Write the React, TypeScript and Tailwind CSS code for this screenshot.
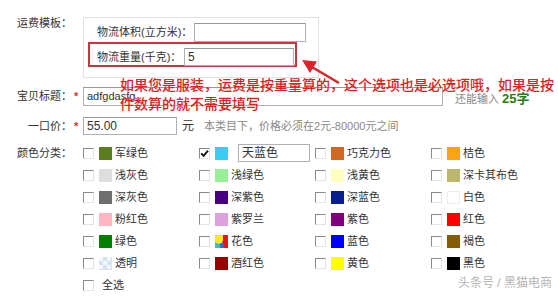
import React from "react";

const FONT = "[font-family:'Liberation_Sans','Noto_Sans_CJK_SC',sans-serif]";

function Checkbox({ checked = false }: { checked?: boolean }) {
  return (
    <span className="relative flex h-[11px] w-[11px] shrink-0 items-center justify-center border border-t-[#8a8a8a] border-l-[#8a8a8a] border-r-[#e4e4e4] border-b-[#e4e4e4] bg-white">
      {checked && (
        <svg width="9" height="9" viewBox="0 0 9 9" className="block">
          <path d="M1.2 4.4 L3.6 6.9 L8 1.6" fill="none" stroke="#111" strokeWidth="1.9" />
        </svg>
      )}
    </span>
  );
}

function FlowerSwatch() {
  return (
    <svg width="13" height="13" viewBox="0 0 13 13" className="block shrink-0">
      <rect x="0" y="0" width="13" height="13" fill="#fff" />
      <rect x="7" y="0" width="6" height="13" fill="#e8141c" />
      <polygon points="0,0 8,0 8,6 4,9 0,7" fill="#ffe81a" />
      <polygon points="0,7 4,9 5,13 0,13" fill="#3cc3a8" />
      <polygon points="4,9 8,7 9,13 5,13" fill="#2c6fd6" />
    </svg>
  );
}

function ClearSwatch() {
  return (
    <svg width="13" height="13" viewBox="0 0 13 13" className="block shrink-0">
      <rect x="0" y="0" width="13" height="13" fill="#d3e3f4" />
      <rect x="0" y="0" width="4" height="4" fill="#f4f8fd" />
      <rect x="8" y="0" width="4" height="4" fill="#f4f8fd" />
      <rect x="4" y="4" width="4" height="4" fill="#f4f8fd" />
      <rect x="0" y="8" width="4" height="4" fill="#f4f8fd" />
      <rect x="8" y="8" width="4" height="4" fill="#f4f8fd" />
    </svg>
  );
}

type Item = { name: string; color?: string; kind?: "flower" | "clear"; checked?: boolean; edit?: boolean; border?: boolean };

const items: Item[] = [
  { name: "军绿色", color: "#5a7d1e" },
  { name: "天蓝色", color: "#38cdf3", checked: true, edit: true },
  { name: "巧克力色", color: "#d2691e" },
  { name: "桔色", color: "#fca40f" },
  { name: "浅灰色", color: "#dedede" },
  { name: "浅绿色", color: "#96f196" },
  { name: "浅黄色", color: "#ffffbe" },
  { name: "深卡其布色", color: "#bdb76b" },
  { name: "深灰色", color: "#6e6e6e" },
  { name: "深紫色", color: "#4b0082" },
  { name: "深蓝色", color: "#0a1f8f" },
  { name: "白色", color: "#ffffff", border: true },
  { name: "粉红色", color: "#ffb6c1" },
  { name: "紫罗兰", color: "#dda0dd" },
  { name: "紫色", color: "#800080" },
  { name: "红色", color: "#ff0000" },
  { name: "绿色", color: "#008000" },
  { name: "花色", kind: "flower" },
  { name: "蓝色", color: "#0000ff" },
  { name: "褐色", color: "#855c00" },
  { name: "透明", kind: "clear" },
  { name: "酒红色", color: "#990000" },
  { name: "黄色", color: "#ffff00" },
  { name: "黑色", color: "#000000" },
];

function ColorItem({ item }: { item: Item }) {
  return (
    <div className="flex h-[22px] w-[116px] items-center">
      <Checkbox checked={item.checked} />
      <span className="ml-[5px] flex">
        {item.kind === "flower" ? (
          <FlowerSwatch />
        ) : item.kind === "clear" ? (
          <ClearSwatch />
        ) : (
          <span
            className={`block h-[13px] w-[13px] shrink-0 ${item.border ? "border border-[#eeeeee]" : ""}`}
            style={{ backgroundColor: item.color }}
          />
        )}
      </span>
      {item.edit ? (
        <span className="ml-[10px] flex h-[18px] w-[72px] items-center border border-[#b0b0b0] pl-[3px] text-[12px] text-[#333]">
          {item.name}
        </span>
      ) : (
        <span className="ml-[3px] whitespace-nowrap text-[11px] text-[#333]">{item.name}</span>
      )}
    </div>
  );
}

function Label({ text, required = false, className = "" }: { text: string; required?: boolean; className?: string }) {
  return (
    <div className={`flex w-[83px] shrink-0 ${className}`}>
      <span className="w-[72px] whitespace-nowrap text-right text-[11px] text-[#333]">{text}</span>
      {required && <span className="ml-[2px] text-[11px] font-bold text-[#e0302a]">*</span>}
    </div>
  );
}

export default function App() {
  return (
    <div className={`relative h-[299px] w-[558px] overflow-hidden bg-white ${FONT}`}>
      <div className="flex flex-col pt-[17px]">
        {/* 运费模板 */}
        <div className="flex items-start">
          <Label text="运费模板：" className="leading-[12px]" />
          <div className="flex h-[61px] w-[236px] flex-col border border-[#e2e2e2] pt-[5px]">
            <div className="flex h-[19px] items-center pl-[13px]">
              <span className="w-[97px] whitespace-nowrap text-[11px] text-[#333]">物流体积(立方米)：</span>
              <span className="h-[19px] w-[112px] border border-[#b0b0b0] border-t-[#999]" />
            </div>
            <div className="ml-[4px] flex h-[25px] w-[209px] items-start border-2 border-[#c9353a] pl-[7px] pt-[4px]">
              <span className="w-[87px] whitespace-nowrap text-[11px] leading-[18px] text-[#333]">物流重量(千克)：</span>
              <span className="flex h-[18px] w-[110px] items-center border border-[#b0b0b0] border-t-[#999] pl-[3px] text-[12px] text-[#333]">
                5
              </span>
            </div>
          </div>
        </div>

        {/* 宝贝标题 */}
        <div className="mt-[9px] flex h-[19px] items-center">
          <Label text="宝贝标题：" required />
          <span className="flex h-[19px] w-[360px] items-center border border-[#b0b0b0] border-t-[#999] pl-[3px] text-[11px] text-[#333]">
            adfgdasfg
          </span>
          <span className="ml-[12px] mt-[5px] whitespace-nowrap text-[11px] text-[#888]">还能输入</span>
          <span className="ml-[3px] mt-[5px] whitespace-nowrap text-[13px] font-bold text-[#2b7a1c]">25字</span>
        </div>

        {/* 一口价 */}
        <div className="mt-[11px] flex h-[18px] items-center">
          <Label text="一口价：" required />
          <span className="flex h-[18px] w-[94px] items-center border border-[#b0b0b0] border-t-[#999] pl-[3px] text-[12px] text-[#333]">
            55.00
          </span>
          <span className="ml-[5px] text-[12px] text-[#333]">元</span>
          <span className="ml-[10px] whitespace-nowrap text-[11px] text-[#888]">本类目下，价格必须在2元-80000元之间</span>
        </div>

        {/* 颜色分类 */}
        <div className="mt-[7px] flex items-start">
          <Label text="颜色分类：" className="leading-[22px]" />
          <div className="flex flex-col">
            <div className="grid grid-cols-[116px_116px_116px_116px]">
              {items.map((it) => (
                <ColorItem key={it.name} item={it} />
              ))}
            </div>
            <div className="flex h-[22px] items-center">
              <Checkbox />
              <span className="ml-[8px] text-[11px] text-[#333]">全选</span>
            </div>
          </div>
        </div>
      </div>

      {/* annotation overlay */}
      <div className="absolute left-[120px] top-[76px] whitespace-nowrap text-[14px] font-medium leading-[19px] text-[#e0201c]">
        <div>如果您是服装，运费是按重量算的，这个选项也是必选项哦，如果是按</div>
        <div>件数算的就不需要填写</div>
      </div>
      <svg className="absolute left-0 top-0" width="558" height="299" viewBox="0 0 558 299" pointerEvents="none">
        <line x1="339" y1="83" x2="311" y2="66.5" stroke="#d8252a" strokeWidth="2.6" />
        <polygon points="302,60 317,61.5 310,73" fill="#d8252a" />
      </svg>

      {/* watermark */}
      <div className="absolute bottom-[9px] right-[6px] whitespace-nowrap text-[12px] leading-[14px] text-[#b4b4b4]">
        头条号 / 黑猫电商
      </div>
    </div>
  );
}
